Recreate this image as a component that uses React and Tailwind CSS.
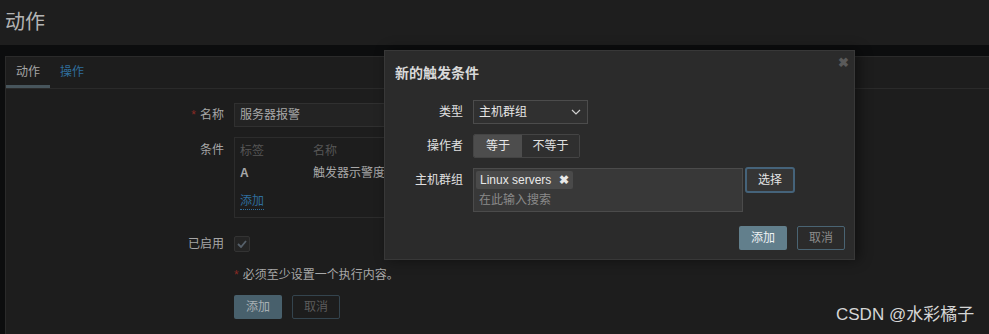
import React from "react";

const F = { fontFamily: '"Liberation Sans", Arial, "Noto Sans CJK SC", sans-serif' };

export default function App() {
  return (
    <div
      className="relative w-[989px] h-[334px] overflow-hidden bg-[#0c0d0e] text-[12px] leading-[14px]"
      style={F}
    >
      {/* header */}
      <div className="h-[45px] bg-[#1e1e1e] flex items-center pl-[5px]">
        <div className="text-[20px] leading-[24px] text-[#b4b4b4] -mt-[2px]">动作</div>
      </div>
      <div className="h-[11px]" />
      {/* card */}
      <div className="ml-[5px] h-[300px] bg-[#1d1d1d] border-l border-t border-[#2a2a2a]">
        {/* tabs */}
        <div className="flex h-[32px] border-b border-[#2a2a2a]">
          <div className="w-[44px] flex flex-col">
            <div className="flex-1 flex items-center justify-center text-[#a6a6a6] pt-[1px]">动作</div>
            <div className="h-[3px] bg-[#47555c]" />
          </div>
          <div className="w-[44px] flex items-center justify-center text-[#2f6d9c] pt-[1px] -mt-[2px]">操作</div>
        </div>
        {/* form */}
        <div className="pt-[14px] flex flex-col gap-[10px]">
          <div className="flex items-center gap-[10px]">
            <div className="w-[218px] text-right text-[#a6a6a6]">
              <span className="text-[#8a2a24] mr-[4px]">*</span>名称
            </div>
            <div className="w-[453px] h-[24px] bg-[#232323] border border-[#303030] flex items-center px-[5px] text-[#a8a8a8]">
              服务器报警
            </div>
          </div>
          <div className="flex items-start gap-[10px]">
            <div className="w-[218px] text-right text-[#a6a6a6] pt-[6px]">条件</div>
            <div className="w-[600px] h-[81px] border border-[#2c2c2c] px-[5px] pt-[6px]">
              <div className="flex text-[#565656] h-[14px]">
                <div className="w-[73px]">标签</div>
                <div>名称</div>
              </div>
              <div className="flex text-[#a8a8a8] mt-[8px] h-[14px]">
                <div className="w-[73px] font-bold">A</div>
                <div>触发器示警度</div>
              </div>
              <div className="mt-[14px]">
                <span className="text-[#2f6d9c] border-b border-dotted border-[#2f6d9c] pb-[1px]">添加</span>
              </div>
            </div>
          </div>
          <div className="flex items-center gap-[10px] mt-[8px]">
            <div className="w-[218px] text-right text-[#a6a6a6]">已启用</div>
            <div className="w-[16px] h-[16px] bg-[#242424] border border-[#333] rounded-[2px] flex items-center justify-center">
              <svg width="10" height="8" viewBox="0 0 10 8">
                <path d="M1 4 L4 7 L9 1" stroke="#56606a" strokeWidth="1.8" fill="none" />
              </svg>
            </div>
          </div>
          <div className="flex gap-[10px] mt-[6px]">
            <div className="w-[218px]" />
            <div className="text-[#a8a8a8]">
              <span className="text-[#8a2a24] mr-[4px]">*</span>必须至少设置一个执行内容。
            </div>
          </div>
          <div className="flex gap-[10px] mt-[3px]">
            <div className="w-[218px]" />
            <div className="flex gap-[10px]">
              <div className="w-[48px] h-[24px] bg-[#48606c] rounded-[2px] flex items-center justify-center text-[#a8b0b4]">添加</div>
              <div className="w-[48px] h-[24px] border border-[#34444e] rounded-[2px] flex items-center justify-center text-[#5c5c5c]">取消</div>
            </div>
          </div>
        </div>
      </div>

      {/* dialog */}
      <div className="absolute left-[384px] top-[50px] w-[471px] h-[210px] bg-[#2b2b2b] border border-[#383838] shadow-[4px_0_12px_rgba(0,0,0,0.45)]">
        <div className="absolute right-[5px] top-[5px] text-[#5a5a5a] text-[13px] font-bold">✖</div>
        <div className="pl-[10px] pt-[14px] text-[14px] leading-[16px] font-bold text-[#d8d8d8]">新的触发条件</div>
        <div className="pt-[19px] flex flex-col gap-[10px]">
          <div className="flex items-center gap-[10px]">
            <div className="w-[78px] text-right text-[#e0e0e0]">类型</div>
            <div className="w-[115px] h-[24px] bg-[#303030] border border-[#4c4c4c] flex items-center justify-between pl-[5px] pr-[6px] text-[#e6e6e6]">
              <span>主机群组</span>
              <svg width="10" height="6" viewBox="0 0 10 6">
                <path d="M1 1 L5 5 L9 1" stroke="#d0d0d0" strokeWidth="1.2" fill="none" />
              </svg>
            </div>
          </div>
          <div className="flex items-center gap-[10px]">
            <div className="w-[78px] text-right text-[#e0e0e0]">操作者</div>
            <div className="flex h-[24px] border border-[#444] rounded-[2px] overflow-hidden">
              <div className="w-[48px] bg-[#4d4d4d] flex items-center justify-center text-[#e8e8e8]">等于</div>
              <div className="w-[57px] bg-[#2f2f2f] flex items-center justify-center text-[#e0e0e0]">不等于</div>
            </div>
          </div>
          <div className="flex items-start gap-[10px]">
            <div className="w-[78px] text-right text-[#e0e0e0] pt-[5px]">主机群组</div>
            <div className="w-[270px] h-[44px] bg-[#383838] border border-[#4b4b4b] pl-[2px] pt-[2px]">
              <div className="inline-flex items-center h-[18px] bg-[#4a4a4a] rounded-[2px] px-[4px] text-[#e8e8e8]">
                <span>Linux servers</span>
                <span className="ml-[8px] text-[12px] font-bold">✖</span>
              </div>
              <div className="pl-[3px] mt-[4px] text-[#8a8a8a]">在此输入搜索</div>
            </div>
            <div className="-mt-[1px] ml-[-8px] w-[50px] h-[26px] border-2 border-[#45637a] rounded-[3px] bg-[#353535] flex items-center justify-center text-[#e6e6e6]">
              选择
            </div>
          </div>
        </div>
        <div className="flex justify-end gap-[10px] pr-[9px] mt-[14px]">
          <div className="w-[48px] h-[24px] bg-[#627f8c] rounded-[2px] flex items-center justify-center text-[#eef2f4]">添加</div>
          <div className="w-[48px] h-[24px] border border-[#4a6473] rounded-[2px] flex items-center justify-center text-[#8c8c8c]">取消</div>
        </div>
      </div>

      {/* watermark */}
      <div className="absolute left-[836px] top-[305px] text-[17px] leading-[20px] text-[#d6d6d6]">
        CSDN @水彩橘子
      </div>
    </div>
  );
}
